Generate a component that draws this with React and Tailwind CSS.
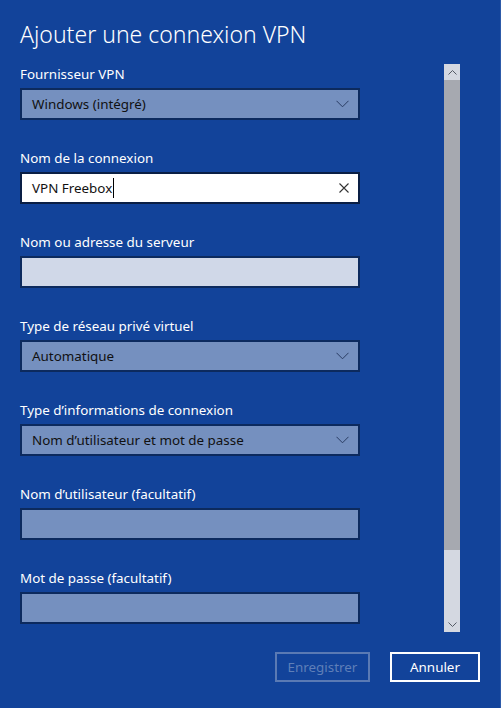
import React from "react";

const font = { fontFamily: '"Noto Sans", "Open Sans", Arial, sans-serif' };

function Chevron() {
  return (
    <svg width="13" height="8" viewBox="0 0 13 8" className="shrink-0">
      <path d="M0.5 0.8 L6.5 6.8 L12.5 0.8" fill="none" stroke="#2a3c62" strokeWidth="1" />
    </svg>
  );
}

function Field({ label, children }) {
  return (
    <div className="mb-[28px]">
      <div className="h-[20px] text-[13.4px] leading-[20px] text-white">{label}</div>
      <div className="mt-[4px]">{children}</div>
    </div>
  );
}

function Select({ value }) {
  return (
    <div className="flex h-[32px] w-[340px] items-center justify-between border-2 border-[#0c2a5e] bg-[#7590bf] pl-[10px] pr-[9px] text-[13.4px] text-[#111]">
      <span>{value}</span>
      <Chevron />
    </div>
  );
}

function Box({ light }) {
  return (
    <div
      className={
        "h-[32px] w-[340px] border-2 border-[#0c2a5e] " +
        (light ? "bg-[#d0d8e8]" : "bg-[#7590bf]")
      }
    />
  );
}

export default function App() {
  return (
    <div style={font} className="relative h-[708px] w-[501px] overflow-hidden bg-[#12439a]">
      <div className="absolute right-0 top-0 h-full w-px bg-[#2d5aa8]" />
      <h1 className="pl-[20px] pt-[17px] text-[23px] font-light leading-[34px] text-white">
        Ajouter une connexion VPN
      </h1>
      <div className="mt-[13px] flex h-[568px]">
        <div className="w-[444px] pl-[20px]">
          <Field label="Fournisseur VPN">
            <Select value="Windows (intégré)" />
          </Field>
          <Field label="Nom de la connexion">
            <div className="flex h-[32px] w-[340px] items-center justify-between border-2 border-[#0a1f45] bg-white pl-[10px] pr-[9px] text-[13.4px] text-[#111]">
              <span className="flex items-center">
                VPN Freebox
                <span className="ml-px inline-block h-[20px] w-px bg-black" />
              </span>
              <svg width="10" height="10" viewBox="0 0 10 10">
                <path d="M0.5 0.5 L9.5 9.5 M9.5 0.5 L0.5 9.5" stroke="#333" strokeWidth="1.1" />
              </svg>
            </div>
          </Field>
          <Field label="Nom ou adresse du serveur">
            <Box light />
          </Field>
          <Field label="Type de réseau privé virtuel">
            <Select value="Automatique" />
          </Field>
          <Field label="Type d’informations de connexion">
            <Select value="Nom d’utilisateur et mot de passe" />
          </Field>
          <Field label="Nom d’utilisateur (facultatif)">
            <Box />
          </Field>
          <Field label="Mot de passe (facultatif)">
            <Box />
          </Field>
        </div>
        {/* vertical scrollbar */}
        <div className="flex w-[16px] flex-col">
          <div className="flex h-[16px] items-center justify-center bg-[#d4d8e1]">
            <svg width="9" height="5" viewBox="0 0 9 5">
              <path d="M0.5 4.5 L4.5 0.5 L8.5 4.5" fill="none" stroke="#555b66" strokeWidth="1" />
            </svg>
          </div>
          <div className="h-[470px] bg-[#a6a9b0]" />
          <div className="flex-1 bg-[#d4d8e1]" />
          <div className="flex h-[16px] items-center justify-center bg-[#d4d8e1]">
            <svg width="9" height="5" viewBox="0 0 9 5">
              <path d="M0.5 0.5 L4.5 4.5 L8.5 0.5" fill="none" stroke="#555b66" strokeWidth="1" />
            </svg>
          </div>
        </div>
      </div>
      <div className="mt-[20px] flex justify-end gap-[20px] pr-[21px]">
        <div className="flex h-[30px] w-[95px] items-center justify-center border-2 border-[#5a7ab4] text-[13.4px] text-[#5f7fb8]">
          Enregistrer
        </div>
        <div className="flex h-[30px] w-[90px] items-center justify-center border-2 border-white text-[13.4px] text-white">
          Annuler
        </div>
      </div>
    </div>
  );
}
